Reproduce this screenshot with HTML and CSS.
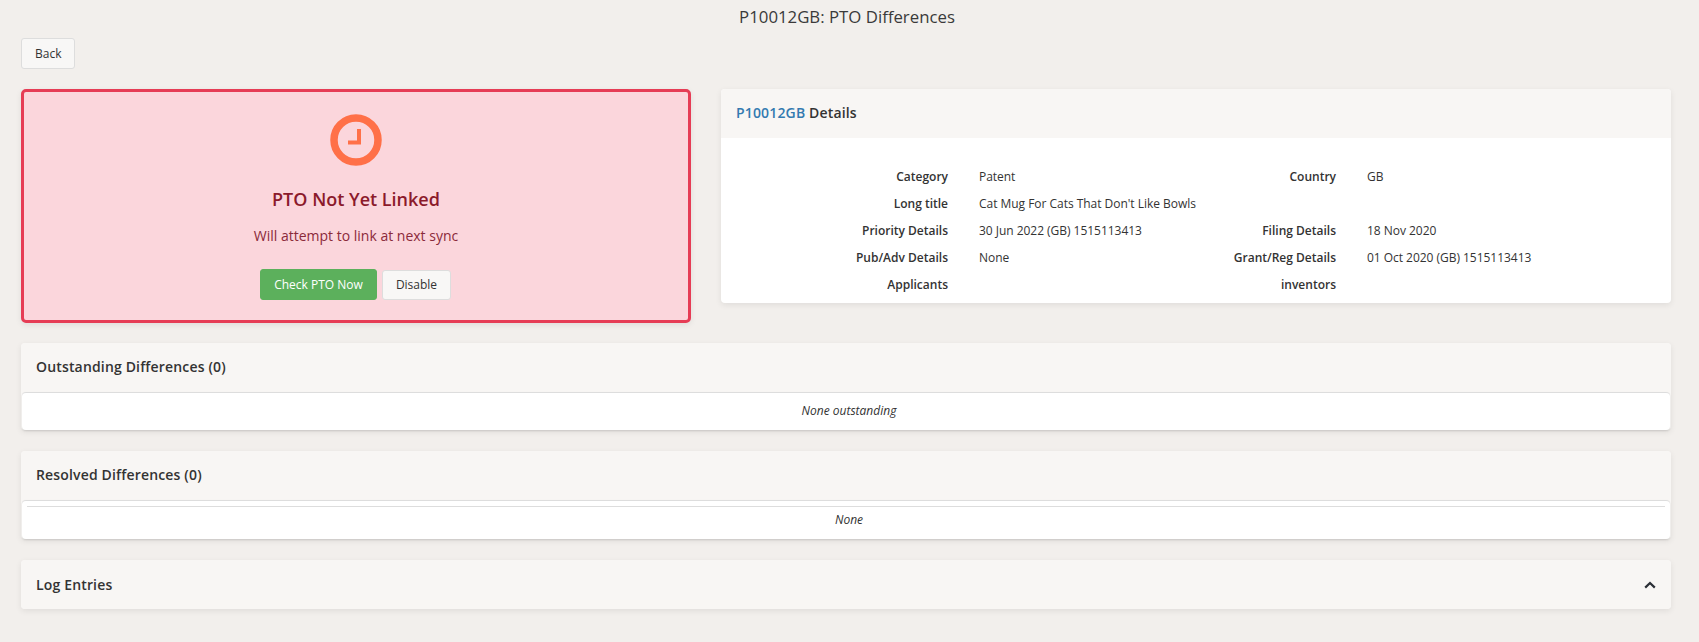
FILE: index.html
```html
<!DOCTYPE html>
<html lang="en">
<head>
<meta charset="utf-8">
<title>P10012GB: PTO Differences</title>
<link rel="stylesheet" href="styles.css">
</head>
<body>
<h1 class="page-title">P10012GB: PTO Differences</h1>
<div class="toolbar"><button class="btn">Back</button></div>
<div class="top-row">
  <div class="alert">
    <svg class="alert-icon" viewBox="0 0 52 52" width="52" height="52" aria-hidden="true">
      <circle cx="26" cy="26" r="22" fill="none" stroke="#ff7048" stroke-width="7.5"/>
      <path d="M29 15v13.5h-11" fill="none" stroke="#ff7048" stroke-width="4"/>
    </svg>
    <h2 class="alert-title">PTO Not Yet Linked</h2>
    <p class="alert-text">Will attempt to link at next sync</p>
    <div class="alert-actions">
      <button class="btn btn-success">Check PTO Now</button>
      <button class="btn btn-plain">Disable</button>
    </div>
  </div>
  <section class="card details">
    <header class="card-head"><a class="ref" href="#">P10012GB</a> Details</header>
    <div class="detail-grid">
      <div class="lbl">Category</div><div class="val">Patent</div><div class="lbl">Country</div><div class="val">GB</div>
      <div class="lbl">Long title</div><div class="val wide">Cat Mug For Cats That Don't Like Bowls</div>
      <div class="lbl">Priority Details</div><div class="val">30 Jun 2022 (GB) 1515113413</div><div class="lbl">Filing Details</div><div class="val">18 Nov 2020</div>
      <div class="lbl">Pub/Adv Details</div><div class="val">None</div><div class="lbl">Grant/Reg Details</div><div class="val">01 Oct 2020 (GB) 1515113413</div>
      <div class="lbl">Applicants</div><div class="val"></div><div class="lbl">inventors</div><div class="val"></div>
    </div>
  </section>
</div>
<section class="card section">
  <header class="card-head">Outstanding Differences (0)</header>
  <div class="section-body">None outstanding</div>
</section>
<section class="card section">
  <header class="card-head">Resolved Differences (0)</header>
  <div class="section-body has-rule"><hr class="rule"><div class="empty">None</div></div>
</section>
<section class="card section">
  <header class="card-head log-head">Log Entries
    <svg class="chevron" viewBox="0 0 12 8" width="12" height="8" aria-hidden="true"><path d="M1.2 6.6 6 2l4.8 4.6" fill="none" stroke="#2b2f36" stroke-width="2.2"/></svg>
  </header>
</section>
</body>
</html>
```
FILE: styles.css
```css
* { box-sizing: border-box; }
html, body { margin: 0; }
body {
  background: #f2efec;
  color: #333;
  font-family: "Open Sans", sans-serif;
  font-size: 12px;
  padding: 0 28px 12px 21px;
}
.page-title {
  margin: 0;
  height: 38px;
  padding: 6px 0 0 2px;
  font-size: 16.8px;
  line-height: 22px;
  font-weight: 400;
  text-align: center;
  color: #3a3a3a;
}
.toolbar { height: 51px; }
.btn {
  font: 400 12px/16px "Open Sans", sans-serif;
  color: #333;
  background: #f8f7f6;
  border: 1px solid #ddd;
  border-radius: 3px;
  padding: 6px 13px;
  height: 31px;
}
.btn-success {
  background: #5cb05c;
  border-color: #5cb05c;
  color: #fff;
  padding: 0;
  width: 117px;
}
.btn-plain {
  height: 30px;
  padding: 0;
  width: 69px;
}
.top-row {
  display: flex;
  align-items: flex-start;
  gap: 30px;
  margin-bottom: 20px;
}
.alert {
  width: 670px;
  height: 234px;
  flex: none;
  background: #fbd6dc;
  border: 3px solid #e63c55;
  border-radius: 5px;
  box-shadow: 0 2px 6px rgba(0,0,0,.08);
  text-align: center;
  color: #8b2a3a;
  padding-top: 22px;
}
.alert-icon { display: block; margin: 0 auto; }
.alert-title {
  margin: 21px 0 0;
  font-size: 18px;
  line-height: 24px;
  font-weight: 600;
  color: #8b1a2b;
}
.alert-text {
  margin: 15px 0 0;
  font-size: 14px;
  line-height: 20px;
}
.alert-actions {
  margin-top: 23px;
  padding-right: 1px;
  display: flex;
  justify-content: center;
  align-items: center;
  gap: 5px;
}
.card {
  background: #fff;
  border-radius: 4px;
  box-shadow: 0 2px 6px rgba(0,0,0,.08);
}
.details { flex: 1; height: 214px; }
.card-head {
  height: 49px;
  background: #f8f6f4;
  padding: 0 15px;
  font-size: 14px;
  font-weight: 600;
  letter-spacing: .16px;
  line-height: 48px;
  color: #333;
  border-radius: 4px 4px 0 0;
}
.ref { color: #337ab0; text-decoration: none; }
.detail-grid {
  display: grid;
  grid-template-columns: 212px 198px 130px 1fr;
  column-gap: 30px;
  padding: 25px 0 0 15px;
  grid-auto-rows: 27px;
  line-height: 27px;
}
.lbl { text-align: right; font-weight: 600; }
.val { padding-left: 1px; letter-spacing: -.03px; }
.wide { grid-column: span 3; }
.section {
  margin-bottom: 21px;
  background: #f8f6f4;
}
.section-body {
  margin: 0 1px;
  height: 38px;
  padding-left: 6px;
  background: #fff;
  border-top: 1px solid #ddd;
  border-radius: 4px;
  box-shadow: 0 1px 2px rgba(0,0,0,.12);
  text-align: center;
  font-style: italic;
  line-height: 36px;
}
.has-rule { height: 39px; line-height: normal; padding: 5px 5px 0; }
.rule { margin: 0; border: 0; border-top: 1px solid #ddd; }
.empty { line-height: 26px; padding-left: 6px; }
.log-head {
  display: flex;
  align-items: center;
  justify-content: space-between;
  border-radius: 4px;
}
```
